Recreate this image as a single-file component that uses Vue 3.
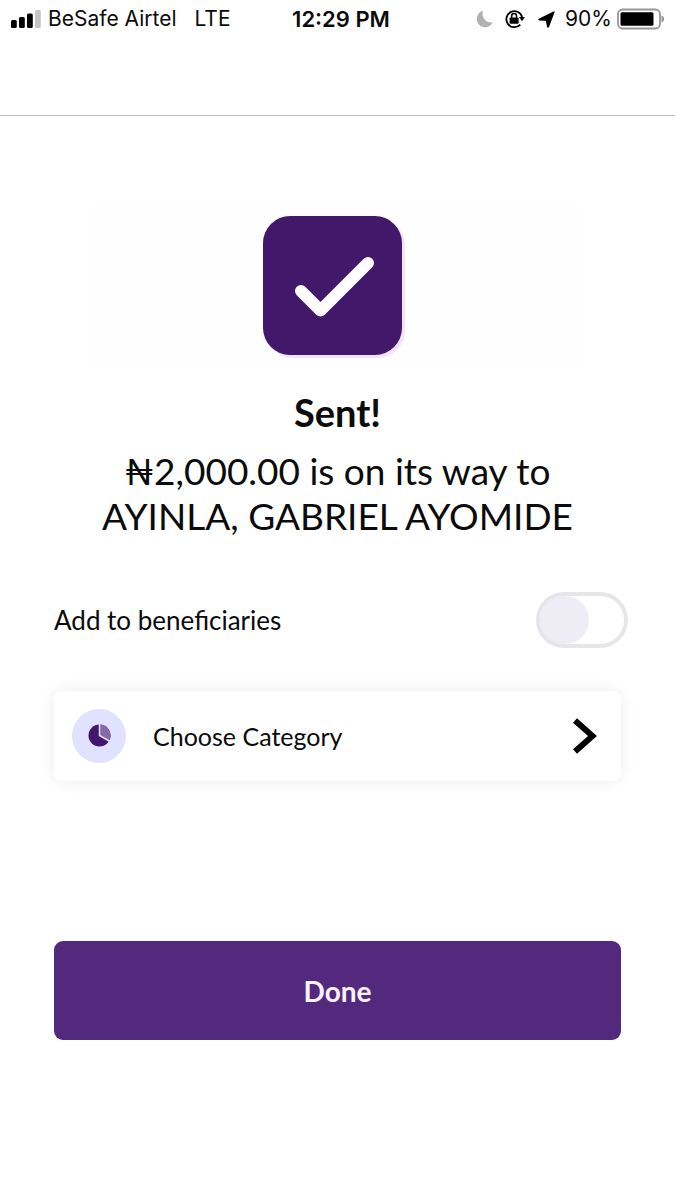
<script setup>
import { ref } from 'vue'

const addBeneficiary = ref(false)
</script>

<template>
  <div class="screen">
    <header class="status">
      <div class="side">
        <svg class="signal" width="30" height="18" viewBox="0 0 30 18" aria-hidden="true">
          <rect x="0" y="10" width="5.8" height="8" rx="1.6" />
          <rect x="8" y="7" width="5.8" height="11" rx="1.6" />
          <rect x="16" y="3.500" width="5.8" height="14.500" rx="1.6" />
          <rect x="24" y="0" width="5.8" height="18" rx="1.6" fill="#c4c4c4" />
        </svg>
        <span class="carrier">BeSafe Airtel</span>
        <span>LTE</span>
      </div>
      <span class="time">12:29 PM</span>
      <div class="side end">
        <svg class="moon" width="16" height="18" viewBox="0 0 16 18" aria-hidden="true">
          <path d="M5.800 .8A8.400 8.400 0 1 0 15.900 12.200C10 13.800 4.200 8.500 5.800 .8Z" fill="#b1b1b1" />
        </svg>
        <svg class="lock" width="20" height="20" viewBox="0 0 20 20" aria-hidden="true">
          <path d="M15.300 15.600A8 8 0 1 1 17.200 8.500" fill="none" stroke="#000" stroke-width="1.800" />
          <path d="M14 8h6l-3 4.200Z" />
          <rect x="4.600" y="8.400" width="9" height="6.400" rx=".8" />
          <path d="M6.700 9V7a2.400 2.400 0 0 1 4.800 0v2" fill="none" stroke="#000" stroke-width="1.500" />
        </svg>
        <svg class="arrow" width="17" height="17" viewBox="0 0 17 17" aria-hidden="true">
          <path d="M15.400 .5Q16.900 0 16.500 1.400L11 16Q10 17.600 9.100 16L7.900 10.200Q7.800 9.700 7.200 9.700L1.300 9.500Q-.7 8.900 .8 7.700Z" />
        </svg>
        <span class="percent">90%</span>
        <svg width="48" height="22" viewBox="0 0 48 22" aria-hidden="true">
          <rect x="1" y="1.500" width="42" height="19" rx="4.500" fill="#fff" stroke="#969696" stroke-width="1.800" />
          <rect x="3.500" y="4.200" width="33" height="13.600" rx="1.500" />
          <path d="M44.500 7.500c3.400 .8 3.400 6.200 0 7Z" fill="#969696" />
        </svg>
      </div>
    </header>

    <main class="content">
      <div class="art">
        <svg width="142" height="142" viewBox="0 0 142 142" aria-hidden="true">
          <rect x="3" y="3" width="139" height="139" rx="27" fill="#f3e2ff" />
          <rect width="139" height="139" rx="27" fill="#42186b" />
          <path d="M38 75 57.500 94.500 105 47" fill="none" stroke="#fff" stroke-width="12" stroke-linecap="round" stroke-linejoin="round" />
        </svg>
      </div>

      <h1>Sent!</h1>
      <p class="message">₦2,000.00 is on its way to<br />AYINLA, GABRIEL AYOMIDE</p>

      <label class="beneficiary">
        <span>Add to beneficiaries</span>
        <input v-model="addBeneficiary" type="checkbox" role="switch" class="toggle" />
      </label>

      <button type="button" class="category">
        <span class="badge">
          <svg width="24" height="24" viewBox="0 0 24 24" aria-hidden="true">
            <circle cx="12.500" cy="11.500" r="11" fill="#42186b" />
            <path d="M12.500 11.500V.5A11 11 0 0 1 22 17Z" fill="#8869a5" />
            <path d="M12.500 0V11.500L23 17.500" fill="none" stroke="#e0e2ff" stroke-width="1.500" />
          </svg>
        </span>
        <span class="label">Choose Category</span>
        <svg width="24" height="36" viewBox="0 0 24 36" aria-hidden="true">
          <path d="M2 2.500 19.500 18 2 33.500" fill="none" stroke="#000" stroke-width="6" />
        </svg>
      </button>

      <button type="button" class="done">Done</button>
    </main>
  </div>
</template>

<style>
body {
  margin: 0;
  background: #fff;
}
</style>

<style scoped>
.screen {
  min-height: 100vh;
  background: #fff;
  color: #0b0b0b;
  font-family: Lato, "Noto Sans", sans-serif;
}

.status {
  display: flex;
  align-items: flex-start;
  box-sizing: border-box;
  height: 116px;
  padding: 8px 10px 0 11px;
  border-bottom: 1px solid #b9b9b9;
  font-family: Inter, sans-serif;
  font-size: 21px;
  line-height: 22px;
  white-space: nowrap;
}

.side {
  display: flex;
  flex: 1;
  align-items: center;
}

.end {
  justify-content: flex-end;
}

.signal {
  margin-right: 7px;
}

.carrier {
  margin-right: 18px;
}

.time {
  margin-left: 6px;
  font-size: 22px;
  font-weight: 600;
}

.moon {
  margin-right: 12px;
}

.lock {
  margin-right: 13px;
}

.arrow {
  margin-right: 10px;
}

.percent {
  margin-right: 5px;
}

.content {
  display: flex;
  flex-direction: column;
  padding: 90px 54px 0;
}

.art {
  display: flex;
  justify-content: center;
  margin: 0 41px 0 38px;
  padding: 10px 4px 9px 0;
  background: #fefefe;
}

h1 {
  margin: 23px 0 0;
  font-size: 38px;
  line-height: 44px;
  font-weight: 700;
  text-align: center;
}

.message {
  margin: 14px 0 0;
  font-size: 37px;
  line-height: 45px;
  text-align: center;
}

.beneficiary {
  display: flex;
  align-items: center;
  justify-content: space-between;
  margin: 54px -7px 0 0;
  font-size: 26px;
  line-height: 32px;
}

.toggle {
  appearance: none;
  display: flex;
  box-sizing: border-box;
  width: 92px;
  height: 56px;
  margin: 0;
  border: 4px solid #e6e6e8;
  border-radius: 28px;
  background: #fff;
}

.toggle::before {
  content: "";
  width: 49px;
  height: 48px;
  border-radius: 24px;
  background: #eeedf5;
}

.toggle:checked {
  justify-content: flex-end;
  background: #53297e;
}

.category {
  display: flex;
  align-items: center;
  height: 90px;
  margin: 43px 0 0;
  padding: 0 24px 0 18px;
  border: 0;
  border-radius: 7px;
  background: #fff;
  box-shadow: 0 0 16px rgba(0, 0, 0, 0.08);
  color: inherit;
  font: inherit;
  font-size: 25px;
  text-align: left;
}

.badge {
  display: flex;
  align-items: center;
  justify-content: center;
  width: 54px;
  height: 54px;
  border-radius: 50%;
  background: #e0e2ff;
}

.label {
  flex: 1;
  margin-left: 27px;
}

.done {
  height: 99px;
  margin: 160px 0 0;
  border: 0;
  border-radius: 9px;
  background: #53297e;
  color: #fbf3ff;
  font: inherit;
  font-size: 28px;
  font-weight: 700;
}
</style>
